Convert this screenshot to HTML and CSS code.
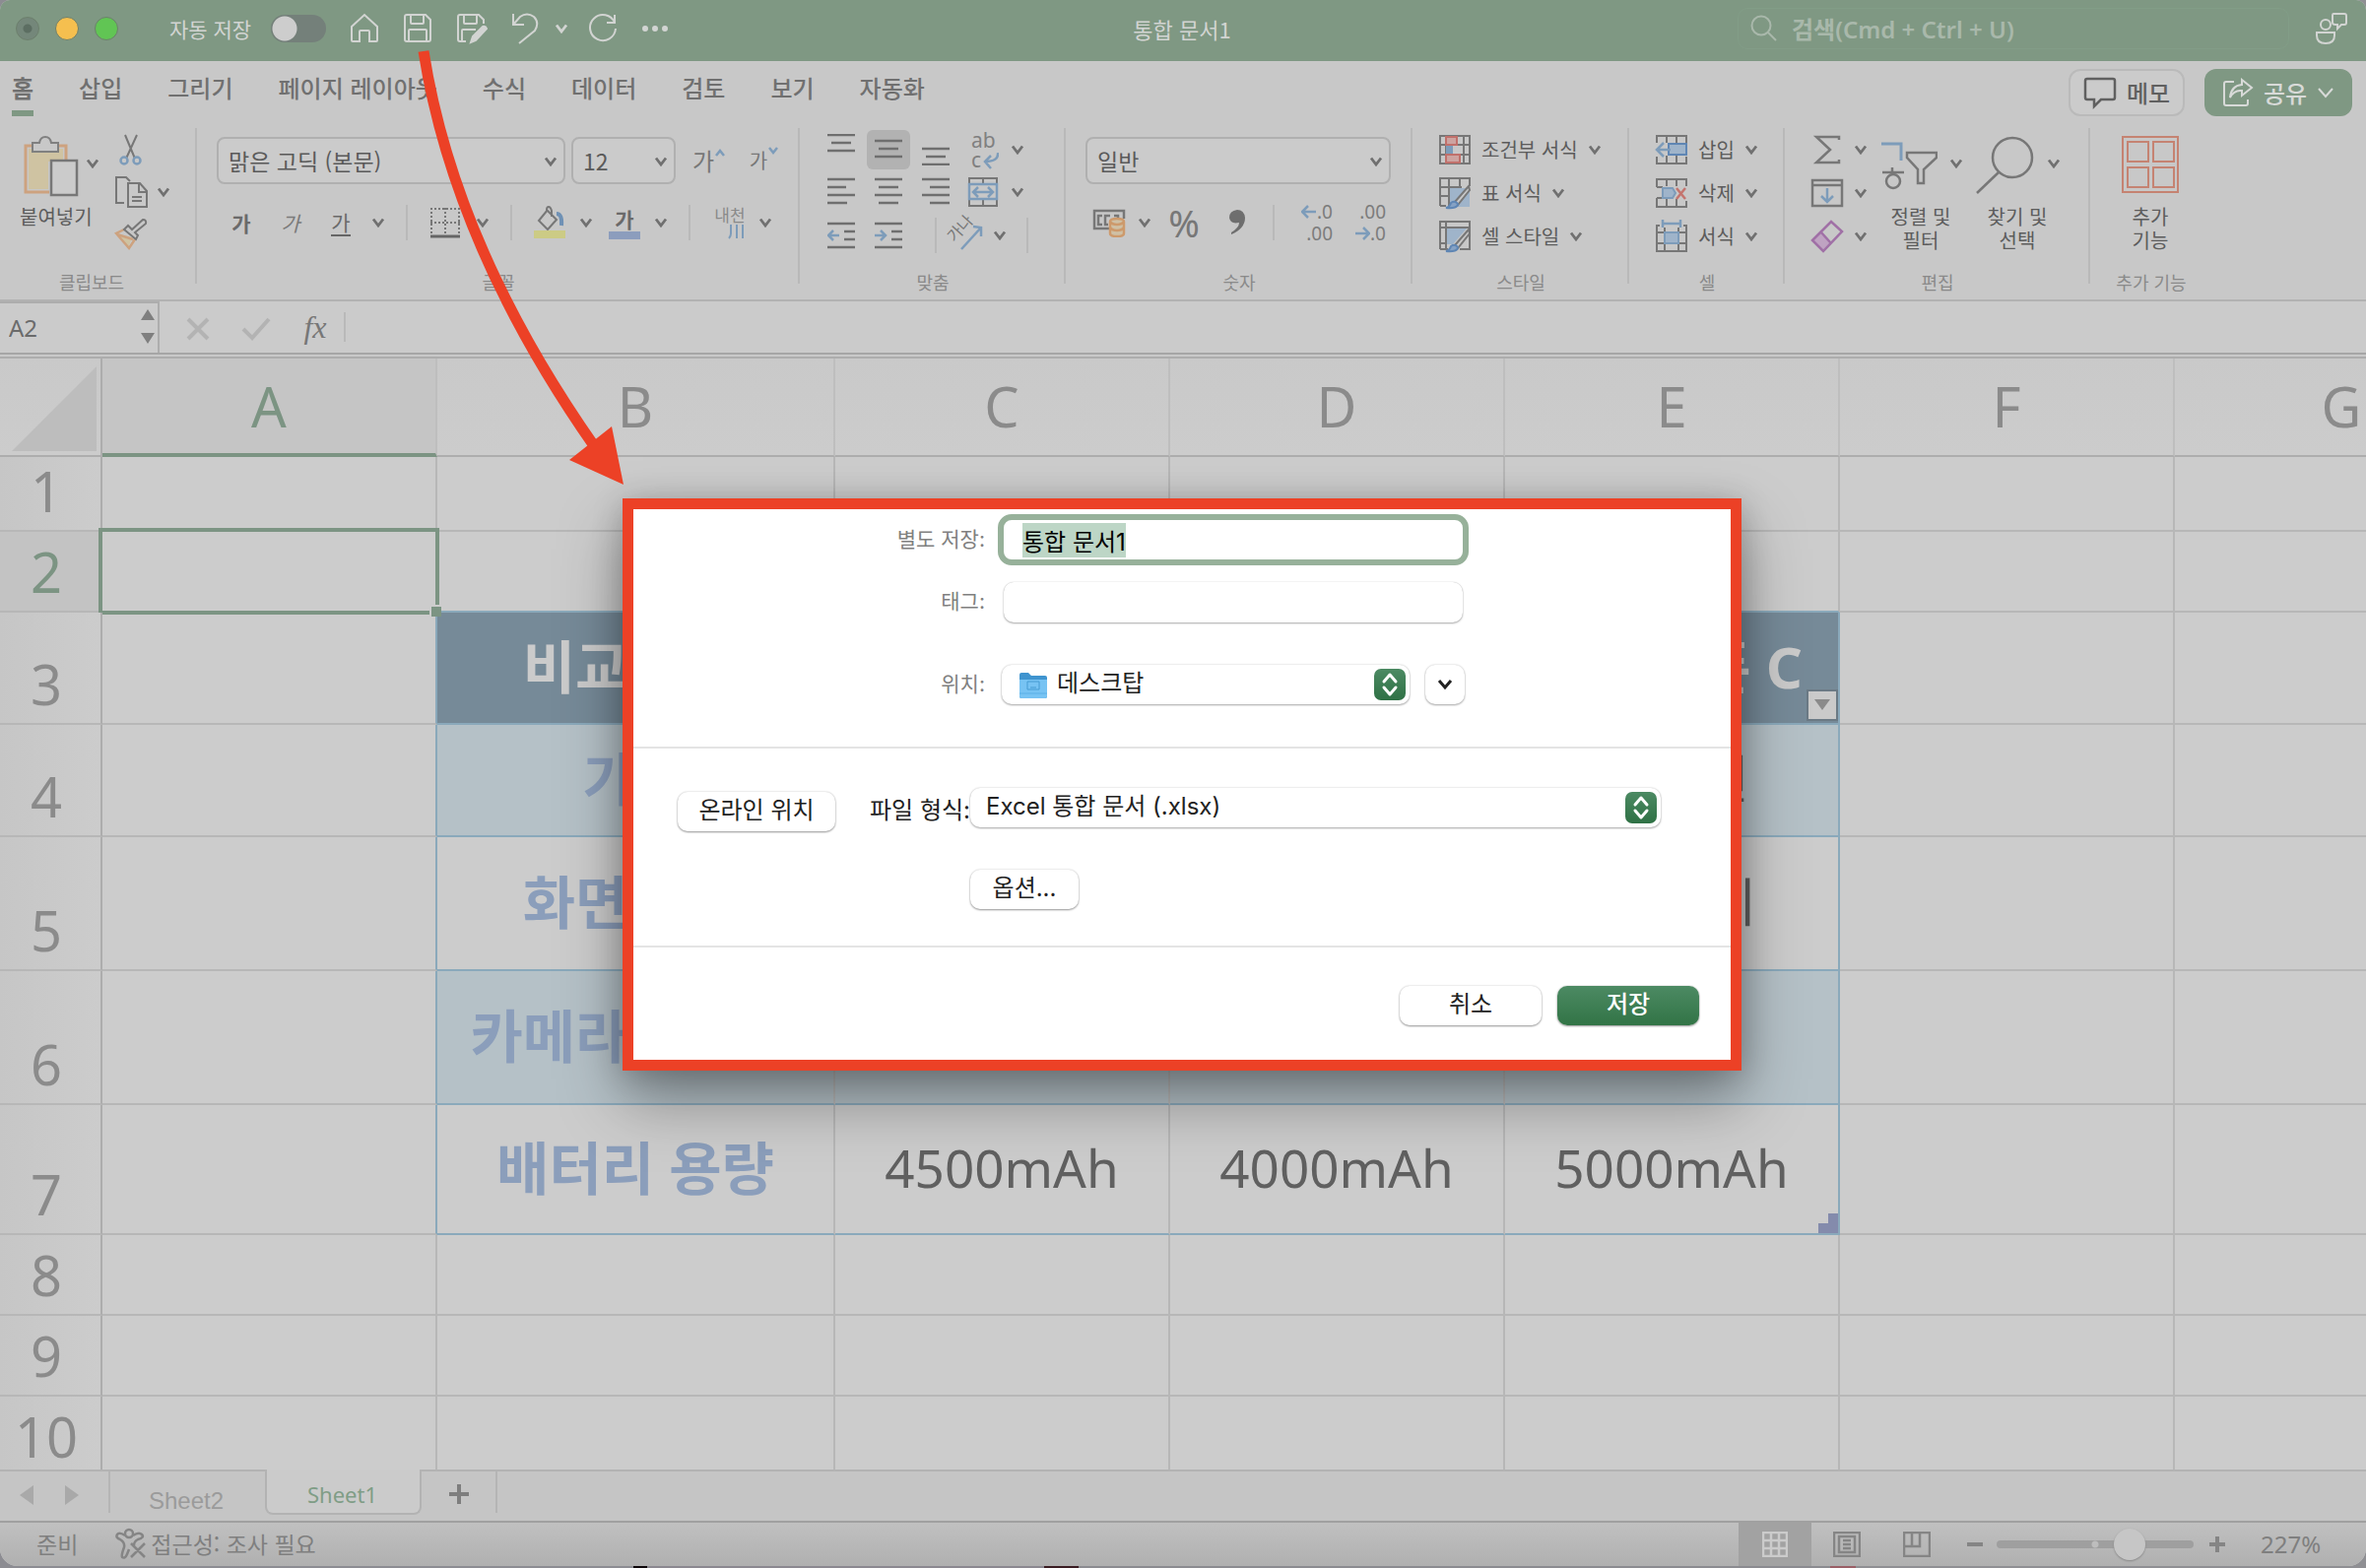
FILE: index.html
```html
<!DOCTYPE html>
<html lang="ko">
<head>
<meta charset="utf-8">
<title>통합 문서1</title>
<link rel="stylesheet" href="styles.css">
</head>
<body>
<svg class="defs" aria-hidden="true">
  <symbol id="chev" viewBox="0 0 14 10"><path d="M2 1.500L7 8l5-6.500" fill="none" stroke="currentColor" stroke-width="2.800"/></symbol>
  <symbol id="updown" viewBox="0 0 32 32"><path d="M10 13l6-7 6 7M10 19l6 7 6-7" fill="none" stroke="#fff" stroke-width="3" stroke-linecap="round" stroke-linejoin="round"/></symbol>
</svg>
<div class="app">
  <header class="titlebar">
    <div class="title-left">
      <span class="light light-off"></span><span class="light light-yellow"></span><span class="light light-green"></span>
      <label class="autosave">자동 저장 <input type="checkbox" class="switch"></label>
      <button class="tb" aria-label="홈"><svg width="30" height="32" viewBox="0 0 30 32"><path d="M2 14L15 2l13 12v14q0 1-1 1h-7V19q0-1-1-1h-8q-1 0-1 1v10H3q-1 0-1-1z"/></svg></button>
      <button class="tb" aria-label="저장"><svg width="30" height="32" viewBox="0 0 30 32"><path d="M4 2h19l5 5v20q0 2-2 2H4q-2 0-2-2V4q0-2 2-2zM8 2v8q0 1 1 1h11q1 0 1-1V2M6 29V18q0-1 1-1h16q1 0 1 1v11"/></svg></button>
      <button class="tb" aria-label="다른 이름으로 저장"><svg width="32" height="32" viewBox="0 0 32 32"><path d="M10 29H4q-2 0-2-2V4q0-2 2-2h19l5 5v4M8 2v8q0 1 1 1h11q1 0 1-1V2M6 29V18q0-1 1-1h13"/><path class="solid" d="M15 30l2-6L27 14q3-1 4 2L20 28z"/></svg></button>
      <button class="tb" aria-label="실행 취소"><svg width="28" height="34" viewBox="0 0 28 34"><path d="M2 2v11h11M2 13L9 5q7-5 14 0 6 6 1 14L8 32"/></svg></button>
      <button class="tb" aria-label="실행 취소 목록"><svg class="chev"><use href="#chev"/></svg></button>
      <button class="tb tb-wide" aria-label="다시 실행"><svg width="30" height="30" viewBox="0 0 30 30"><path d="M27 1v8h-8M27 9A13 13 0 1 0 28 15"/></svg></button>
      <button class="tb" aria-label="더 보기"><svg width="28" height="8" viewBox="0 0 28 8"><g class="solid"><circle cx="4" cy="4" r="2"/><circle cx="14" cy="4" r="2"/><circle cx="24" cy="4" r="2"/></g></svg></button>
    </div>
    <h1 class="doc-title">통합 문서1</h1>
    <div class="title-right">
      <label class="search"><svg width="28" height="28" viewBox="0 0 28 28"><circle cx="11" cy="11" r="9.500"/><path d="M18 18l8 8"/></svg><input type="search" placeholder="검색(Cmd + Ctrl + U)" aria-label="검색"></label>
      <button class="tb account" aria-label="계정"><svg width="34" height="34" viewBox="0 0 34 34"><circle cx="11" cy="13" r="5"/><path d="M2 21h18v3q0 8-9 8t-9-8zM19 2h11q2 0 2 2v7q0 2-2 2h-3l-4 4v-4h-2q-3 0-3-2V4q0-2 1-2z"/></svg></button>
    </div>
  </header>

  <nav class="tabs">
    <a href="#home" class="current">홈</a><a href="#insert">삽입</a><a href="#draw">그리기</a><a href="#layout">페이지 레이아웃</a><a href="#formula">수식</a><a href="#data">데이터</a><a href="#review">검토</a><a href="#view">보기</a><a href="#auto">자동화</a>
    <button class="memo"><svg width="34" height="34" viewBox="0 0 34 34"><path d="M4 3h26q2 0 2 2v17q0 2-2 2H18l-7 7v-7H4q-2 0-2-2V5q0-2 2-2z"/></svg>메모</button>
    <button class="share"><svg width="32" height="30" viewBox="0 0 32 30"><path d="M12 4H4Q2 4 2 6v20q0 2 2 2h20q2 0 2-2v-4M20 2l10 8-10 8v-5Q12 12 8 20 9 8 20 7z"/></svg>공유<svg width="18" height="12" viewBox="0 0 18 12"><path d="M2 2l7 8 7-8"/></svg></button>
  </nav>

  <div class="ribbon">
    <section class="group g-clip">
      <div class="body clip">
        <button class="big"><span class="big-icon"><svg width="56" height="62" viewBox="0 0 56 62"><path d="M10 10H2v47h24M34 10h9v14" fill="none" stroke="#cda27f" stroke-width="3"/><path d="M5 13v41h20V26h15V13z" fill="#cfc3a2"/><path d="M9 7h7q1-6 6-6t6 6h7v9H9z" fill="#c8c8c8" stroke="#808080" stroke-width="2"/><path d="M28 25h26v35H28z" fill="#cbcbcb" stroke="#777" stroke-width="2.500"/></svg><svg class="chev"><use href="#chev"/></svg></span>붙여넣기</button>
        <div class="clip-col">
          <button aria-label="잘라내기"><svg width="34" height="34" viewBox="0 0 34 34"><path d="M11 2l10 24M23 2L12 26" stroke="#777" stroke-width="2"/><g stroke="#7d9cba" stroke-width="2.500"><circle cx="10" cy="28" r="3.500"/><circle cx="23" cy="28" r="3.500"/></g></svg></button><span></span>
          <button aria-label="복사"><svg width="34" height="34" viewBox="0 0 34 34"><path d="M10 28H2V2h10l4 4M14 8h12l7 8v16H14zM25 8v9h8M18 22h10M18 26h10" stroke="#777" stroke-width="2"/></svg></button><svg class="chev"><use href="#chev"/></svg>
          <button aria-label="서식 복사"><svg width="34" height="34" viewBox="0 0 34 34"><path d="M2 16l16 4-4 11z" fill="#cfc3a2"/><path d="M10 12L2 16l13 15 6-9M3 17l16 5" stroke="#cda27f" stroke-width="2.500"/><path d="M10 12l12 10 2-4-3-3L32 6q1-4-3-4L18 12l-4-4z" stroke="#777" stroke-width="2"/></svg></button><span></span>
        </div>
      </div>
      <h2>클립보드</h2>
    </section>

    <section class="group g-font">
      <div class="body stack">
        <div class="row">
          <span class="pick pick-font"><select aria-label="글꼴"><option>맑은 고딕 (본문)</option></select><svg class="chev"><use href="#chev"/></svg></span>
          <span class="pick pick-size"><select aria-label="글꼴 크기"><option>12</option></select><svg class="chev"><use href="#chev"/></svg></span>
          <button class="grow" aria-label="글꼴 크게"><span class="ga-big">가</span><svg width="12" height="8" viewBox="0 0 12 8"><path d="M2 7l4-5 4 5" stroke="#7d9cba" stroke-width="2.500"/></svg></button>
          <button class="grow" aria-label="글꼴 작게"><span class="ga-small">가</span><svg width="12" height="8" viewBox="0 0 12 8"><path d="M2 1l4 5 4-5" stroke="#7d9cba" stroke-width="2.500"/></svg></button>
        </div>
        <div class="font-tools">
          <button class="ga"><b>가</b></button><button class="ga"><i>가</i></button><button class="ga"><u>가</u></button><svg class="chev"><use href="#chev"/></svg><i class="sep"></i>
          <button aria-label="테두리"><svg width="32" height="32" viewBox="0 0 32 32"><path d="M1 2h30M1 16h30M2 1v28M16 1v28M30 1v28" stroke="#777" stroke-width="2" stroke-dasharray="2 2"/><path d="M1 30h30" stroke="#666" stroke-width="3"/></svg></button><svg class="chev"><use href="#chev"/></svg><i class="sep"></i>
          <button aria-label="채우기 색"><svg width="34" height="34" viewBox="0 0 34 34"><path d="M15 4L6 15l9 9 9-10L14 4q0-3 2-3t3 4v6" stroke="#777" stroke-width="2"/><path d="M24 8q6 0 5 12" stroke="#6f91b5" stroke-width="4"/><path d="M1 25h32v8H1z" fill="#cccb85" /></svg></button><svg class="chev"><use href="#chev"/></svg>
          <button class="ga ga-color"><b>가</b></button><svg class="chev"><use href="#chev"/></svg><i class="sep"></i>
          <button class="phonetic"><span>내천</span><svg width="18" height="16" viewBox="0 0 18 16"><path d="M3 1v9q0 3-2 5M9 1v14M15 1v14" stroke="#7d9cba" stroke-width="2"/></svg></button><svg class="chev"><use href="#chev"/></svg>
        </div>
      </div>
      <h2>글꼴</h2>
    </section>

    <section class="group g-align">
      <div class="body align">
        <button aria-label="위쪽 맞춤"><svg class="ln" viewBox="0 0 28 32"><path d="M0 1h28M4 9h20M0 17h28"/></svg></button>
        <button class="on" aria-label="가운데 맞춤"><svg class="ln" viewBox="0 0 28 32"><path d="M0 7h28M4 15h20M0 23h28"/></svg></button>
        <button aria-label="아래쪽 맞춤"><svg class="ln" viewBox="0 0 28 32"><path d="M0 15h28M4 23h20M0 31h28"/></svg></button>
        <button class="wrap-btn" aria-label="텍스트 줄 바꿈"><span>ab<br>c</span><svg width="16" height="18" viewBox="0 0 16 18"><path d="M15 1q1 9-13 9M8 4l-6 6 6 7" stroke="#7d9cba" stroke-width="2.500"/></svg></button><svg class="chev"><use href="#chev"/></svg>
        <button aria-label="왼쪽 맞춤"><svg class="ln" viewBox="0 0 28 32"><path d="M0 3h28M0 11h19M0 19h28M0 27h20"/></svg></button>
        <button aria-label="가운데"><svg class="ln" viewBox="0 0 28 32"><path d="M0 3h28M4 11h20M0 19h28M4 27h20"/></svg></button>
        <button aria-label="오른쪽 맞춤"><svg class="ln" viewBox="0 0 28 32"><path d="M0 3h28M8 11h20M0 19h28M8 27h20"/></svg></button>
        <button aria-label="병합"><svg width="32" height="32" viewBox="0 0 32 32"><path d="M2 8V2h28v6M16 2v6M2 24v6h28v-6M16 24v6" stroke="#777" stroke-width="2"/><path d="M2 8h28v15H2zM6 16h20M11 11l-5 5 5 5M21 11l5 5-5 5" stroke="#7d9cba" stroke-width="2.500"/></svg></button><svg class="chev"><use href="#chev"/></svg>
        <button aria-label="내어쓰기"><svg class="ln" viewBox="0 0 28 32"><path d="M0 4h28M17 12h11M17 20h11M0 28h28"/><path d="M1 16h11M6 11l-5 5 5 5" stroke="#7d9cba"/></svg></button>
        <button aria-label="들여쓰기"><svg class="ln" viewBox="0 0 28 32"><path d="M0 4h28M17 12h11M17 20h11M0 28h28"/><path d="M0 16h11M6 11l5 5-5 5" stroke="#7d9cba"/></svg></button>
        <i class="sep"></i>
        <span class="orient"><button aria-label="방향"><span>가나</span><svg width="34" height="34" viewBox="0 0 34 34"><path d="M12 31L32 9M24 8l8 1v9" stroke="#7d9cba" stroke-width="2.500"/></svg></button><svg class="chev"><use href="#chev"/></svg></span><i class="sep sep-end"></i>
      </div>
      <h2>맞춤</h2>
    </section>

    <section class="group g-num">
      <div class="body stack">
        <span class="pick pick-num"><select aria-label="표시 형식"><option>일반</option></select><svg class="chev"><use href="#chev"/></svg></span>
        <div class="num-tools">
          <button aria-label="통화"><svg width="34" height="30" viewBox="0 0 34 30"><path d="M17 21H2V3h30v8M10 8H6v9h4M18 8h-5v9h3M22 8h4v4" stroke="#777" stroke-width="2.500"/><path d="M18 14q0-3 7-3t7 3v12q0 3-7 3t-7-3z" fill="#cfc0a5"/><path d="M18 14q0-3 7-3t7 3v12q0 3-7 3t-7-3zM18 14q2 3 7 3t7-3M18 20q2 3 7 3t7-3" stroke="#cd9a6c" stroke-width="2.500"/></svg></button><svg class="chev"><use href="#chev"/></svg>
          <button class="pct">%</button>
          <button aria-label="쉼표 스타일"><svg width="18" height="28" viewBox="0 0 18 28"><path d="M9 1q7 0 8 8 0 11-14 17v-2q8-5 8-10-9 2-10-5 0-7 8-8z" fill="#6e6e6e"/></svg></button><i class="sep"></i>
          <button class="dec dec-l" aria-label="자릿수 늘림"><svg width="16" height="14" viewBox="0 0 16 14"><path d="M1 7h14M7 1L1 7l6 6" stroke="#7d9cba" stroke-width="2.500"/></svg><span>.0</span><span>.00</span></button>
          <button class="dec dec-r" aria-label="자릿수 줄임"><span>.00</span><svg width="16" height="14" viewBox="0 0 16 14"><path d="M1 7h14M9 1l6 6-6 6" stroke="#7d9cba" stroke-width="2.500"/></svg><span>.0</span></button>
        </div>
      </div>
      <h2>숫자</h2>
    </section>

    <section class="group g-style">
      <div class="body list">
        <button><svg width="34" height="32" viewBox="0 0 34 32"><path d="M2 2h30v28H2zM8 2v28M26 2v28M2 11h30M2 21h30" stroke="#777" stroke-width="2"/><path d="M8 3h11v8H8zM8 21h14v8H8z" fill="#cda3a0" stroke="#c0706b" stroke-width="2"/><path d="M8 12h7v8H8z" fill="#7d9cba"/></svg>조건부 서식<svg class="chev"><use href="#chev"/></svg></button>
        <button><svg width="34" height="34" viewBox="0 0 34 34"><path d="M2 30V2h30v8M11 2v28M22 2v8M2 11h22M2 20h12M2 30h6" stroke="#777" stroke-width="2"/><path d="M12 12h20v19H12z" fill="#9fb4ca"/><path d="M31 10L17 26l3 3 12-15z" fill="#c8c8c8" stroke="#777" stroke-width="2"/><path d="M8 32q4-1 5-5 4-3 7 1 0 5-12 4z" fill="#86a2c4" stroke="#5f86b4" stroke-width="2"/></svg>표 서식<svg class="chev"><use href="#chev"/></svg></button>
        <button><svg width="34" height="34" viewBox="0 0 34 34"><path d="M2 30V2h30v28H22M2 8h30M8 2v28M2 24h8M2 30h8" stroke="#777" stroke-width="2"/><path d="M9 9h20L15 25H9z" fill="#9fb4ca"/><path d="M31 10L17 26l3 3 12-15z" fill="#c8c8c8" stroke="#777" stroke-width="2"/><path d="M8 32q4-1 5-5 4-3 7 1 0 5-12 4z" fill="#86a2c4" stroke="#5f86b4" stroke-width="2"/></svg>셀 스타일<svg class="chev"><use href="#chev"/></svg></button>
      </div>
      <h2>스타일</h2>
    </section>

    <section class="group g-cell">
      <div class="body list">
        <button><svg width="34" height="32" viewBox="0 0 34 32"><path d="M2 9V2h30v7M2 23v7h30v-7M12 2v7M22 2v7M12 22v8M22 22v8" stroke="#777" stroke-width="2"/><path d="M14 10h18v11H14z" fill="#9fb4ca" stroke="#5f86b4" stroke-width="2"/><path d="M2 16h14M9 9l-7 7 7 7" stroke="#7d9cba" stroke-width="2.500"/></svg>삽입<svg class="chev"><use href="#chev"/></svg></button>
        <button><svg width="34" height="32" viewBox="0 0 34 32"><path d="M2 10V2h30v7M2 21v9h30v-6M2 10h6M2 21h6M12 2v7M22 2v7M12 22v8M22 22v8" stroke="#777" stroke-width="2"/><path d="M8 11h10l3 5-3 5H8z" fill="#9fb4ca" stroke="#7d9cba" stroke-width="2"/><path d="M22 11l9 11M31 11l-9 11" stroke="#c4746e" stroke-width="2.500"/></svg>삭제<svg class="chev"><use href="#chev"/></svg></button>
        <button><svg width="34" height="34" viewBox="0 0 34 34"><path d="M5 6H2v26h30V6h-3M10 8v24M24 8v24M2 13h30M2 24h30" stroke="#777" stroke-width="2"/><path d="M10 13h14v11H10z" fill="#9fb4ca" stroke="#7d9cba" stroke-width="2"/><path d="M8 4h18M8 0v8M26 0v8" stroke="#7d9cba" stroke-width="2.500"/></svg>서식<svg class="chev"><use href="#chev"/></svg></button>
      </div>
      <h2>셀</h2>
    </section>

    <section class="group g-edit">
      <div class="body edit">
        <div class="list">
          <button aria-label="합계"><svg width="34" height="30" viewBox="0 0 34 30"><path d="M29 5V2H6l14 13L6 28h23v-3" stroke="#777" stroke-width="2.500"/></svg><svg class="chev"><use href="#chev"/></svg></button>
          <button aria-label="채우기"><svg width="34" height="30" viewBox="0 0 34 30"><path d="M2 2h30v26H2zM2 7h30" stroke="#777" stroke-width="2.500"/><path d="M17 10v14M11 18l6 6 6-6" stroke="#7d9cba" stroke-width="2.500"/></svg><svg class="chev"><use href="#chev"/></svg></button>
          <button aria-label="지우기"><svg width="34" height="34" viewBox="0 0 34 34"><path d="M2 21l9-8 10 10-8 9z" fill="#bfa3c2"/><path d="M2 21L21 2l11 10-19 20zM11 13l9 10" stroke="#a070a6" stroke-width="2.500"/></svg><svg class="chev"><use href="#chev"/></svg></button>
        </div>
        <button class="big"><span class="big-icon"><svg width="58" height="62" viewBox="0 0 58 62"><path d="M1 8h20v17" stroke="#7d9cba" stroke-width="3"/><path d="M12 32v6M2 37h22" stroke="#777" stroke-width="2.500"/><circle cx="13" cy="46" r="7" stroke="#777" stroke-width="2.500"/><path d="M27 17h30v5L44 34v14h-6V34L27 22z" stroke="#777" stroke-width="2.500"/></svg><svg class="chev"><use href="#chev"/></svg></span>정렬 및<br>필터</button>
        <button class="big"><span class="big-icon"><svg width="60" height="62" viewBox="0 0 60 62"><circle cx="37" cy="22" r="20" stroke="#777" stroke-width="2.500"/><path d="M23 37L1 58" stroke="#777" stroke-width="2.500"/></svg><svg class="chev"><use href="#chev"/></svg></span>찾기 및<br>선택</button>
      </div>
      <h2>편집</h2>
    </section>

    <section class="group g-add">
      <div class="body">
        <button class="big"><span class="big-icon"><svg width="58" height="62" viewBox="0 0 58 62"><path d="M1 1h56v56H1zM6 6h21v20H6zM32 6h21v20H32zM6 32h21v20H6zM32 32h21v20H32z" stroke="#c58372" stroke-width="2"/></svg></span>추가<br>기능</button>
      </div>
      <h2>추가 기능</h2>
    </section>
  </div>

  <div class="formula">
    <div class="namebox"><input value="A2" aria-label="이름 상자"><svg width="16" height="36" viewBox="0 0 16 36"><path d="M1 11L8 0l7 11zM1 24h14L8 35z" fill="#7f7f7f"/></svg></div>
    <button aria-label="취소"><svg width="24" height="24" viewBox="0 0 24 24"><path d="M2 2l20 20M22 2L2 22" stroke="#b3b3b3" stroke-width="4"/></svg></button>
    <button aria-label="입력"><svg width="30" height="24" viewBox="0 0 30 24"><path d="M2 12l9 9L28 2" stroke="#b3b3b3" stroke-width="4"/></svg></button>
    <button class="fx">fx</button>
    <input class="fx-input" aria-label="수식 입력줄">
  </div>

  <main class="sheet">
    <table>
      <colgroup><col class="c-head"><col class="c-std"><col class="c-wide"><col class="c-std"><col class="c-std"><col class="c-std"><col class="c-std"><col class="c-std"></colgroup>
      <thead><tr class="h100"><th class="corner"><svg width="86" height="86" viewBox="0 0 86 86"><path d="M86 0v86H0z" fill="#bdbdbd"/></svg></th><th class="sel">A</th><th>B</th><th>C</th><th>D</th><th>E</th><th>F</th><th>G</th></tr></thead>
      <tbody>
        <tr class="h76"><th>1</th><td></td><td></td><td></td><td></td><td></td><td></td><td></td></tr>
        <tr class="h82 above"><th class="sel">2</th><td class="cursor"><span class="handle"></span></td><td></td><td></td><td></td><td></td><td></td><td></td></tr>
        <tr class="h114 t head"><th>3</th><td></td><td>비교 항목</td><td></td><td></td><td>스마트폰 C<button class="filter" aria-label="필터"><svg width="16" height="12" viewBox="0 0 16 12"><path d="M0 0h16L8 11z" fill="#8a8a8a"/></svg></button></td><td></td><td></td></tr>
        <tr class="h114 t band"><th>4</th><td></td><td>가격</td><td></td><td></td><td>90만원</td><td></td><td></td></tr>
        <tr class="h136 t"><th>5</th><td></td><td>화면 크기</td><td></td><td></td><td>6.7인치</td><td></td><td></td></tr>
        <tr class="h136 t band"><th>6</th><td></td><td>카메라 해상도</td><td></td><td></td><td></td><td></td><td></td></tr>
        <tr class="h132 t"><th>7</th><td></td><td>배터리 용량</td><td>4500mAh</td><td>4000mAh</td><td>5000mAh<span class="corner-mark"></span></td><td></td><td></td></tr>
        <tr class="h82"><th>8</th><td></td><td></td><td></td><td></td><td></td><td></td><td></td></tr>
        <tr class="h82"><th>9</th><td></td><td></td><td></td><td></td><td></td><td></td><td></td></tr>
        <tr class="h82"><th>10</th><td></td><td></td><td></td><td></td><td></td><td></td><td></td></tr>
      </tbody>
    </table>
  </main>

  <div class="sheets">
    <div class="arrows"><button aria-label="이전"><svg width="14" height="22" viewBox="0 0 14 22"><path d="M14 1v20L0 11z" fill="#a9a9a9"/></svg></button><button aria-label="다음"><svg width="14" height="22" viewBox="0 0 14 22"><path d="M0 1v20l14-10z" fill="#a9a9a9"/></svg></button></div>
    <a href="#sheet2" class="tab2">Sheet2</a><a href="#sheet1" class="tab1">Sheet1</a>
    <button class="plus" aria-label="새 시트"><svg width="20" height="20" viewBox="0 0 20 20"><path d="M10 0v20M0 10h20" stroke="#7e7e7e" stroke-width="4"/></svg></button>
  </div>

  <footer class="status">
    <span class="ready">준비</span>
    <button class="a11y"><svg width="32" height="32" viewBox="0 0 32 32"><circle cx="14" cy="6" r="4"/><path d="M10 8Q4 4 2 7t3 5q5 3 4 8-3 8-2 10 3 2 5-3l2-5M18 8q6-4 9-1t-4 5q-4 2-4 6M16 16l14 14M30 16L16 30"/></svg>접근성: 조사 필요</button>
    <button class="view view-on" aria-label="기본"><svg width="26" height="26" viewBox="0 0 26 26"><path d="M1 1h24v24H1zM9 1v24M17 1v24M1 9h24M1 17h24" stroke="#cbcbcb"/></svg></button>
    <button class="view" aria-label="페이지 레이아웃"><svg width="28" height="26" viewBox="0 0 28 26"><path d="M1 1h26v24H1zM6 5h16v16H6zM10 9h8M10 13h8M10 17h8"/></svg></button>
    <button class="view" aria-label="페이지 나누기"><svg width="28" height="26" viewBox="0 0 28 26"><path d="M1 1h26v24H1zM9 1v14M17 1v14H1"/></svg></button>
    <button class="zoom-btn" aria-label="축소"><svg width="16" height="16" viewBox="0 0 16 16"><path d="M0 8h16" stroke-width="4"/></svg></button>
    <input type="range" min="0" max="100" value="71" aria-label="확대/축소">
    <button class="zoom-btn" aria-label="확대"><svg width="16" height="16" viewBox="0 0 16 16"><path d="M0 8h16M8 0v16" stroke-width="4"/></svg></button>
    <output class="zoom-val">227%</output>
  </footer>
</div>

<div class="layer">
  <form class="dialog">
    <div class="part fields">
      <label for="fname">별도 저장:</label><input id="fname" class="fname" value="통합 문서1" autofocus>
      <label for="tag">태그:</label><input id="tag" class="tag">
      <label for="place">위치:</label>
      <div class="place-row"><span class="mac place"><svg class="folder" width="30" height="28" viewBox="0 0 30 28"><path d="M1 3q0-2 2-2h7l3 3h14q2 0 2 2v19q0 2-2 2H3q-2 0-2-2z" fill="#3f94cf"/><path d="M1 8h28v17q0 2-2 2H3q-2 0-2-2z" fill="#77c3f3"/><path d="M9 10h12v8H9zM12 16h6" fill="none" stroke="#469bd3"/><path d="M1 22h28" stroke="#5db0e6"/></svg><select id="place"><option>데스크탑</option></select><svg class="ud"><use href="#updown"/></svg></span><button type="button" class="expand" aria-label="펼치기"><svg width="16" height="12" viewBox="0 0 16 12"><path d="M2 2l6 7 6-7" fill="none" stroke="#222" stroke-width="3"/></svg></button></div>
    </div>
    <div class="part format">
      <button type="button" class="btn online">온라인 위치</button><label for="fmt">파일 형식:</label><span class="mac fmt"><select id="fmt"><option>Excel 통합 문서 (.xlsx)</option></select><svg class="ud"><use href="#updown"/></svg></span>
      <button type="button" class="btn opt">옵션...</button>
    </div>
    <div class="part actions"><button type="button" class="btn">취소</button><button type="button" class="btn primary">저장</button></div>
  </form>
</div>
<svg class="arrow" width="220" height="460" viewBox="0 0 220 460" aria-hidden="true"><path d="M10 12Q41 210 184 414" fill="none" stroke="#ec4126" stroke-width="11"/><path d="M213 452L158 427l43-34z" fill="#ec4126"/></svg>
<script>document.getElementById('fname').select();</script>
</body>
</html>
```

FILE: styles.css
```css
* { box-sizing: border-box; }
body {
  margin: 0;
  background: linear-gradient(90deg, #8c8c92 0 643px, #0c0508 643px 657px, #8b8890 657px 1060px, #3a1c22 1060px 1095px, #8b8b90 1095px 1858px, #9a5f66 1858px 1884px, #8f8f93 1884px);
  color: #5c5c5c;
  font-family: "Noto Sans CJK KR", sans-serif;
  font-size: 20px;
  line-height: 24px;
}
.defs { position: absolute; width: 0; height: 0; }
.app { display: flex; flex-direction: column; height: calc(100vh - 2px); background: #c8c8c8; border-radius: 10px 10px 18px 18px; overflow: hidden; }
button, input, select { font: inherit; color: inherit; background: none; border: 0; padding: 0; margin: 0; }
button { display: flex; align-items: center; justify-content: center; white-space: nowrap; }
button svg { fill: none; flex: none; }
select { appearance: none; outline: 0; }
input { outline: 0; }
a { color: inherit; text-decoration: none; }
h1, h2 { margin: 0; font-weight: 400; }
.chev { width: 14px; height: 10px; color: #707070; flex: none; }

.titlebar { display: grid; grid-template-columns: 1fr auto 1fr; align-items: center; height: 62px; flex: none; background: #7f9883; color: #d2d4d2; padding: 0 18px 4px 16px; }
.title-left { display: flex; align-items: center; }
.light { width: 24px; height: 24px; border-radius: 50%; margin-right: 16px; border: 1px solid #6c7f6c; }
.light-off { background: radial-gradient(circle, #5c6e62 0 4px, #74877a 5px); }
.light-yellow { background: #f5bf4f; }
.light-green { background: #61c554; }
.autosave { display: flex; align-items: center; gap: 20px; margin: 0 24px 0 36px; font-size: 21px; }
.switch { appearance: none; width: 56px; height: 28px; border-radius: 14px; background: radial-gradient(circle at 14px 14px, #cdcdcd 0 12px, transparent 13px), #74807a; }
.tb { color: #d2d4d2; margin-right: 24px; }
.tb svg:not(.chev) { stroke: currentColor; stroke-width: 2; }
.tb .solid { fill: currentColor; }
.tb .chev { color: #d2d4d2; margin: 0 -4px 0 -8px; }
.doc-title { font-size: 22px; }
.title-right { display: flex; justify-content: flex-end; align-items: center; gap: 26px; }
.search { display: flex; align-items: center; gap: 14px; width: 560px; height: 42px; border: 1px solid #829d87; border-radius: 10px; padding-left: 12px; }
.search svg { fill: none; stroke: #a9b8ab; stroke-width: 2; }
.search input { flex: 1; font-size: 24px; font-weight: 600; font-family: "Noto Sans", "Noto Sans CJK KR", sans-serif; }
.search input::placeholder { color: #a9b8ab; }
.account { margin: 0; }

.tabs { display: flex; align-items: flex-start; gap: 46px; height: 68px; flex: none; padding: 8px 14px 0 12px; font-size: 24px; line-height: 38px; font-weight: 500; color: #707070; }
.tabs a { border-bottom: 6px solid transparent; padding-bottom: 4px; white-space: nowrap; }
.tabs .current { font-weight: 700; border-image: linear-gradient(#7f9883, #7f9883) 1; }
.memo, .share { height: 48px; border-radius: 12px; font-size: 24px; gap: 10px; }
.memo { width: 118px; margin-left: auto; border: 2px solid #bababa; background: #cbcbcb; color: #606060; }
.memo svg { stroke: #606060; stroke-width: 2.500; }
.share { width: 150px; margin-left: -26px; background: #7f9883; color: #d8dad8; }
.share svg { stroke: #d8dad8; stroke-width: 2; }

.ribbon { display: flex; height: 176px; flex: none; border-bottom: 2px solid #b2b2b2; }
.group { position: relative; display: flex; flex-direction: column; flex: none; }
.group:not(:last-child)::after { content: ""; position: absolute; right: 0; top: 0; height: 158px; width: 2px; background: #b9b9b9; }
.group h2 { font-size: 18px; line-height: 24px; text-align: center; color: #8a8a8a; margin-top: -4px; }
.body { height: 148px; }
.g-clip { width: 200px; }
.g-font { width: 612px; }
.g-align { width: 270px; }
.g-num { width: 352px; }
.g-style { width: 220px; }
.g-cell { width: 158px; }
.g-edit { width: 310px; }
.g-add { width: 124px; }
.g-add h2 { text-align: center; }
.g-clip h2 { padding-right: 14px; }
.sep { width: 2px; height: 36px; background: #b9b9b9; }
.big { flex-direction: column; justify-content: flex-start; }
.big-icon { display: flex; align-items: center; gap: 12px; height: 62px; margin-bottom: 8px; }
.big-icon .chev { margin-bottom: 6px; }
.clip { display: flex; gap: 16px; padding: 8px 0 0 20px; }
.clip .big-icon { padding-left: 4px; gap: 7px; }
.clip .big { width: 80px; align-items: flex-start; }
.clip-col { display: grid; grid-template-columns: 34px 14px; grid-template-rows: repeat(3, 43px); column-gap: 9px; align-items: center; margin-top: -8px; }

.stack { display: flex; flex-direction: column; gap: 17px; padding: 9px 0 0 20px; }
.row { display: flex; align-items: center; gap: 6px; }
.pick { position: relative; height: 48px; display: block; flex: none; }
.pick select { width: 100%; height: 100%; border: 2px solid #b0b0b0; border-radius: 8px; background: #cbcbcb; padding: 0 10px; font-size: 23px; color: #5a5a5a; }
.pick .chev { position: absolute; right: 8px; top: 20px; }
.pick-font { width: 354px; }
.pick-size { width: 106px; }
.pick-num { width: 310px; }
.grow { width: 44px; align-items: flex-start; font-size: 24px; color: #777; margin-left: 6px; }
.ga-small { font-size: 20px; line-height: 28px; }
.font-tools { display: grid; grid-template-columns: 50px 50px 52px 24px 34px 44px 32px 26px 52px 22px 56px 18px 40px 42px 30px; align-items: center; justify-items: center; height: 44px; }
.ga { font-size: 21px; color: #6a6a6a; line-height: 26px; }
.ga u { text-decoration: none; border-bottom: 2px solid #666; }
.ga i { color: #7a7a7a; }
.ga-color { width: 32px; border-bottom: 8px solid #8c9dbd; }
.phonetic { flex-direction: column; align-items: flex-end; font-size: 17px; line-height: 18px; color: #8a8a8a; }

.align { display: grid; grid-template-columns: 48px 48px 48px 48px 22px; grid-template-rows: 42px 44px 44px; align-items: center; justify-items: center; padding: 1px 0 0 18px; justify-content: start; }
.ln { width: 28px; height: 32px; stroke: #6f6f6f; stroke-width: 2.500; }
.on { width: 44px; height: 40px; border-radius: 6px; background: #b2b2b2; }
.wrap-btn { position: relative; font-family: "Noto Sans", sans-serif; color: #808080; width: 32px; padding-left: 4px; }
.wrap-btn span { line-height: 20px; text-align: left; width: 100%; font-size: 21px; }
.wrap-btn svg { position: absolute; right: 0; bottom: 0; }
.orient { display: flex; align-items: center; gap: 10px; justify-self: end; }
.sep-end { justify-self: end; }
.orient button { position: relative; width: 34px; height: 34px; }
.orient button span { position: absolute; left: -5px; top: -3px; font-size: 16px; transform: rotate(-48deg); color: #777; }

.num-tools { display: grid; grid-template-columns: 48px 24px 56px 52px 22px 64px 44px; align-items: center; justify-items: center; height: 44px; }
.pct { font-family: "Noto Sans", sans-serif; font-size: 38px; color: #777; }
.dec { display: grid; font-family: "Noto Sans", sans-serif; font-size: 19px; line-height: 22px; color: #7c7c7c; justify-items: end; align-items: center; justify-content: end; width: 34px; }
.dec-l { grid-template-columns: 16px 16px; }
.dec-l span:last-child { grid-column: 1 / 3; }
.dec-r { grid-template-columns: 16px 16px; }
.dec-r span:first-child { grid-column: 1 / 3; }

.list { display: grid; grid-template-rows: repeat(3, 44px); justify-items: start; }
.list button { gap: 10px; }
.g-style .list, .g-cell .list { padding-left: 26px; }
.edit { display: flex; padding-left: 26px; gap: 13px; }
.edit .big { padding-top: 8px; }
.edit .big + .big { margin-left: 2px; }
.edit .big .chev { margin-right: -2px; }
.g-add .big { padding: 8px 0 0 32px; }

.formula { display: flex; align-items: center; height: 54px; flex: none; background: #cbcbcb; border-bottom: 2px solid #a6a6a6; }
.namebox { display: flex; align-items: center; width: 162px; height: 100%; border-right: 2px solid #adadad; border-top: 2px solid #adadad; padding: 0 2px 2px 9px; font-family: "Noto Sans", sans-serif; font-size: 24px; color: #6b6b6b; }
.namebox input { flex: 1; min-width: 0; }
.formula > button { margin-left: 27px; padding-top: 4px; }
.formula > button + button { margin-left: 32px; }
.formula button.fx { width: 42px; font: italic 32px/40px "Liberation Serif", serif; color: #777; }
.formula > button.fx { margin-left: 24px; padding-top: 0; }
.fx-input { flex: 1; height: 30px; margin-left: 8px; border-left: 2px solid #b9b9b9; }

.sheet { flex: 1; min-height: 0; overflow: hidden; margin-top: 2px; border-top: 2px solid #adadad; background: #cccccc; }
table { table-layout: fixed; width: 2548px; border-collapse: separate; border-spacing: 0; }
.c-head { width: 104px; }
.c-std { width: 340px; }
.c-wide { width: 404px; }
.h100 { height: 100px; } .h76 { height: 76px; } .h82 { height: 82px; } .h114 { height: 114px; } .h132 { height: 132px; } .h136 { height: 136px; }
th, td { padding: 0; border: solid #b7b7b7; border-width: 0 2px 2px 0; position: relative; }
th { font: 400 56px/68px "Noto Sans", sans-serif; color: #8b8b8b; }
thead th { background: linear-gradient(#c9c9c9, #cccccc); border-bottom-color: #adadad; border-right-color: #bebebe; vertical-align: middle; padding-bottom: 3px; }
thead .sel { background: #c5c5c5; color: #7c9483; border-bottom: 4px solid #7c9483; padding-bottom: 1px; }
tbody th { vertical-align: bottom; padding: 0 8px 6px 0; background: linear-gradient(90deg, #c6c6c6, #cccccc); border-right-color: #adadad; }
tbody .sel { color: #7c9483; background: #c3c3c3; }
thead .corner { vertical-align: bottom; text-align: right; padding: 0 4px 4px 0; line-height: 0; border-right-color: #adadad; }
.corner svg { vertical-align: bottom; }
td { padding-bottom: 3px; font: 400 53px/64px "Noto Sans", "Noto Sans CJK KR", sans-serif; text-align: center; color: #606060; white-space: nowrap; }
.cursor::before { content: ""; position: absolute; inset: -4px -4px -4px -4px; border: 4px solid #7c9483; }
.handle { position: absolute; right: -6px; bottom: -6px; width: 12px; height: 12px; background: #7c9483; border: solid #cccccc; border-width: 2px 0 0 2px; z-index: 2; }
.above td:nth-child(n+3):nth-child(-n+6), .t td:nth-child(n+3):nth-child(-n+6) { border-bottom-color: #8aa9bb; }
.t td:nth-child(2), .t td:nth-child(6) { border-right-color: #8aa9bb; }
.t td:nth-child(3) { font-size: 58px; font-weight: 700; color: #8b9ebb; }
.band td:nth-child(n+3):nth-child(-n+6) { background: #b5c1c7; }
.head td:nth-child(n+3):nth-child(-n+6) { background: #768a98; color: #cbcbcb; font-weight: 700; font-size: 58px; }
.filter { position: absolute; right: 0; bottom: 2px; width: 32px; height: 32px; background: #cacaca; border: 2px solid #6b7a85; }
.corner-mark { position: absolute; right: 0; bottom: 0; width: 20px; height: 20px; background: #848bac; clip-path: polygon(50% 0, 100% 0, 100% 100%, 0 100%, 0 50%, 50% 50%); }

.sheets { display: flex; height: 52px; flex: none; border-top: 2px solid #b3b3b3; background: #c5c5c5; }
.arrows { display: flex; gap: 32px; width: 112px; height: 42px; padding: 6px 0 0 20px; border-right: 2px solid #b5b5b5; }
.tab2 { width: 157px; padding: 17px 0 0 39px; font: 24px/26px "Liberation Sans", sans-serif; color: #9b9b9b; }
.tab1 { width: 159px; height: 46px; margin-top: -2px; background: #cbcbcb; border: 2px solid #b3b3b3; border-top: 0; border-radius: 0 0 8px 8px; padding-right: 2px; text-align: center; font: 22px/50px "Noto Sans", sans-serif; color: #7f9d86; }
.plus { width: 77px; height: 42px; padding: 4px 0 0; border-right: 2px solid #b5b5b5; }

.status { display: flex; align-items: center; height: 46px; flex: none; border-top: 2px solid #a0a0a0; background: linear-gradient(#c0c0c0, #b0b0b0); font-size: 23px; color: #7f7f7f; }
.ready { margin: 0 38px 0 37px; padding-bottom: 2px; }
.a11y { gap: 4px; margin-right: auto; padding-bottom: 2px; }
.status svg { stroke: #858585; stroke-width: 2.500; }
.view { width: 71px; height: 100%; }
.view-on { width: 74px; background: #a2a2a2; }
.zoom-btn { margin: 0 14px 0 16px; }
.zoom-val { width: 129px; padding-left: 22px; font: 24px/30px "Noto Sans", sans-serif; }
input[type=range] { appearance: none; width: 200px; height: 32px; }
input[type=range]::-webkit-slider-runnable-track { height: 8px; border-radius: 4px; background: radial-gradient(circle at 100px 4px, #bdbdbd 0 3px, transparent 4px), #9f9f9f; }
input[type=range]::-webkit-slider-thumb { appearance: none; width: 32px; height: 32px; margin-top: -12px; border-radius: 50%; background: #c6c6c6; box-shadow: 0 1px 2px #888; }

.layer { position: absolute; inset: 0; display: flex; justify-content: center; align-items: flex-start; padding: 506px 2px 0 0; }
.dialog { width: 1136px; border: 11px solid #ec4126; background: #fff; font-family: Inter, "Noto Sans CJK KR", sans-serif; font-size: 24px; line-height: 30px; color: #222; box-shadow: 0 30px 60px rgba(0,0,0,.35), 0 4px 30px rgba(0,0,0,.2); }
.part + .part { border-top: 2px solid #e4e4e4; }
.fields { display: grid; grid-template-columns: 357px 1fr; grid-template-rows: 62px 64px 104px; column-gap: 19px; height: 241px; align-items: center; }
.fields label { text-align: right; font-size: 21px; color: #808080; }
.fname { width: 466px; height: 40px; border-radius: 8px; outline: 6px solid #97b19a; padding: 0 19px; color: #000; }
.fname::selection { background: #bdd6c6; color: #000; }
.tag { width: 466px; height: 41px; border-radius: 10px; box-shadow: 0 1px 2px #aaa, 0 0 1px #bbb; }
.place-row { display: flex; gap: 16px; margin-left: -2px; }
.mac { position: relative; display: block; height: 40px; border-radius: 10px; box-shadow: 0 1px 2px #aaa, 0 0 2px #ccc; }
.mac select { width: 100%; height: 100%; padding: 0 16px 2px; }
.ud { position: absolute; right: 4px; top: 4px; width: 32px; height: 32px; border-radius: 7px; background: linear-gradient(#4c8a63, #2f7145); }
.place { width: 414px; }
.mac #place { padding-left: 56px; }
.folder { position: absolute; left: 17px; top: 7px; }
.expand { width: 40px; height: 40px; border-radius: 10px; box-shadow: 0 1px 2px #aaa, 0 0 2px #ccc; }
.format { display: grid; grid-template-columns: 160px 105px 701px; grid-template-rows: 40px 40px; column-gap: 16px; row-gap: 43px; height: 202px; padding: 40px 0 0 45px; }
.format label { text-align: right; margin: 8px -16px 0 0; white-space: nowrap; }
.format .online { margin-top: 4px; }
.opt { grid-column: 3; width: 110px; }
.btn { height: 40px; border-radius: 10px; background: #fff; box-shadow: 0 1px 2px #999, 0 0 2px #ccc; font-size: 24px; padding-bottom: 2px; }
.actions { display: flex; justify-content: flex-end; gap: 16px; padding: 39px 32px 35px; }
.actions .btn { width: 144px; }
.primary { background: linear-gradient(#4c8a63, #327446); color: #fff; font-weight: 500; }
.arrow { position: absolute; left: 420px; top: 40px; pointer-events: none; }
```
